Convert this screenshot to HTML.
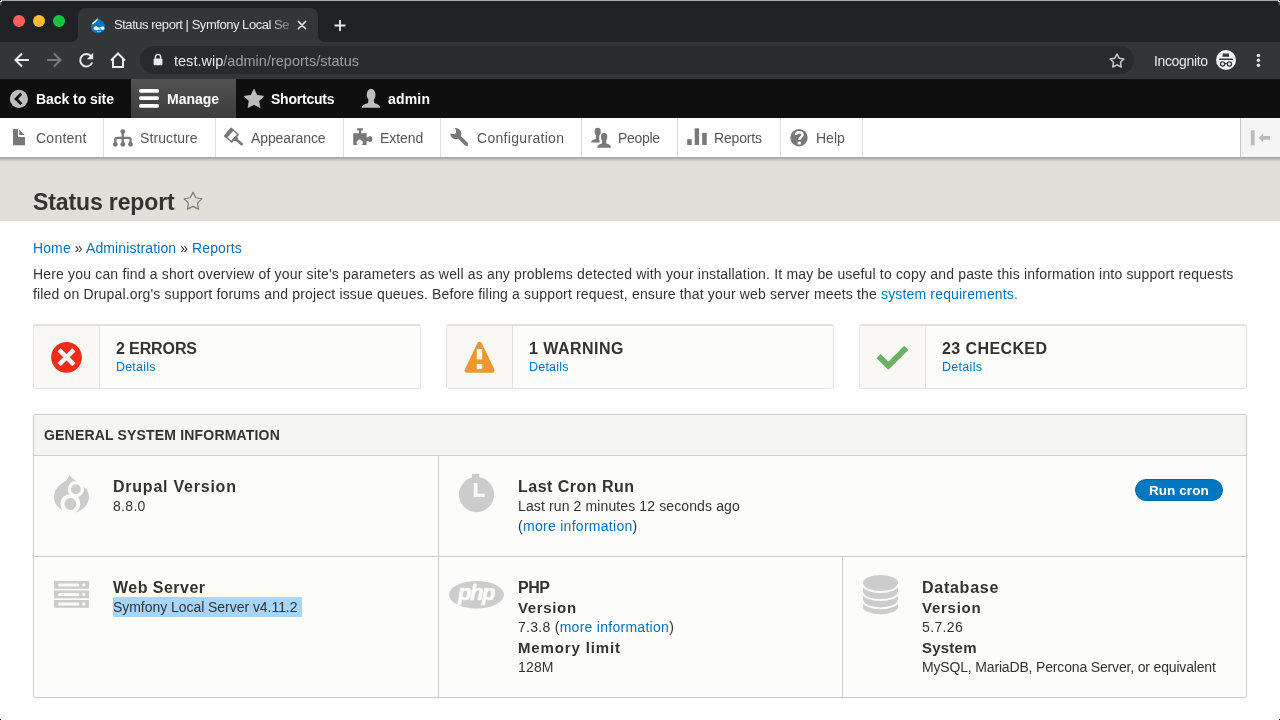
<!DOCTYPE html>
<html><head><meta charset="utf-8"><title>Status report</title>
<style>
html,body{margin:0;padding:0;width:1280px;height:720px;overflow:hidden;background:#fff;font-family:"Liberation Sans",sans-serif;}
.a{position:absolute;}
.tx{position:absolute;white-space:nowrap;font-family:"Liberation Sans",sans-serif;will-change:transform;}
.lk{color:#0074bd;}
svg{position:absolute;overflow:visible;}
.card{position:absolute;top:324px;width:388px;height:65px;box-sizing:border-box;border:1px solid #e6e4df;border-top:2px solid #e2e0da;border-radius:3px;background:#fcfcfa;}
.card .ic{position:absolute;left:0;top:0;width:65px;height:62px;background:#f9f8f5;border-right:1px solid #e6e4df;}
</style></head><body>
<!-- chrome tabstrip -->
<div class="a" style="left:0;top:0;width:1280px;height:42px;background:#202124"></div>
<div class="a" style="left:0;top:0;width:1280px;height:1px;background:#a9a9aa"></div>
<div class="a" style="left:78px;top:8px;width:240px;height:34px;background:#323639;border-radius:8px 8px 0 0"></div>
<!-- toolbar row -->
<div class="a" style="left:0;top:42px;width:1280px;height:37px;background:#323639"></div>
<div class="a" style="left:140px;top:46px;width:994px;height:28px;background:#282b2e;border-radius:14px"></div>
<!-- drupal toolbar -->
<div class="a" style="left:0;top:79px;width:1280px;height:39px;background:#0f0f0f"></div>
<div class="a" style="left:131px;top:79px;width:105px;height:39px;background:linear-gradient(#525252,#3c3c3c)"></div>
<!-- tray -->
<div class="a" style="left:0;top:118px;width:1280px;height:39px;background:#fff"></div>
<div class="a" style="left:1240px;top:118px;width:40px;height:39px;background:#f5f5f5;border-left:1px solid #c8c8c8;box-sizing:border-box"></div>
<div class="a" style="left:103px;top:118px;width:1px;height:39px;background:#e0e0e0"></div><div class="a" style="left:215px;top:118px;width:1px;height:39px;background:#e0e0e0"></div><div class="a" style="left:343px;top:118px;width:1px;height:39px;background:#e0e0e0"></div><div class="a" style="left:440px;top:118px;width:1px;height:39px;background:#e0e0e0"></div><div class="a" style="left:581px;top:118px;width:1px;height:39px;background:#e0e0e0"></div><div class="a" style="left:677px;top:118px;width:1px;height:39px;background:#e0e0e0"></div><div class="a" style="left:780px;top:118px;width:1px;height:39px;background:#e0e0e0"></div><div class="a" style="left:862px;top:118px;width:1px;height:39px;background:#e0e0e0"></div>
<!-- header -->
<div class="a" style="left:0;top:157px;width:1280px;height:64px;background:#e0e0d8"></div>
<div class="a" style="left:0;top:157px;width:1280px;height:5px;background:linear-gradient(#a2a29c,#e0e0d8)"></div>

<!-- status cards -->
<div class="card" style="left:33px"><div class="ic"></div></div>
<div class="card" style="left:446px"><div class="ic"></div></div>
<div class="card" style="left:859px"><div class="ic"></div></div>
<!-- details box -->
<div class="a" style="left:33px;top:414px;width:1214px;height:284px;box-sizing:border-box;border:1px solid #cccccc;border-radius:2px;background:#fcfcfa"></div>
<div class="a" style="left:34px;top:415px;width:1212px;height:40px;background:#f5f5f2;border-bottom:1px solid #cccccc"></div>
<div class="a" style="left:438px;top:456px;width:1px;height:241px;background:#cccccc"></div>
<div class="a" style="left:34px;top:556px;width:1212px;height:1px;background:#cccccc"></div>
<div class="a" style="left:842px;top:557px;width:1px;height:140px;background:#cccccc"></div>
<div class="a" style="left:113px;top:597px;width:189px;height:20px;background:#a8d5fb"></div>
<div class="a" style="left:1135px;top:479px;width:88px;height:22px;box-sizing:border-box;border-radius:11px;background:#0077c0;border:1px solid #0068ae"></div>

<svg width="1280" height="720" style="left:0;top:0" viewBox="0 0 1280 720">
<!-- traffic lights -->
<circle cx="19" cy="21" r="6" fill="#fe5f57"/>
<circle cx="39" cy="21" r="6" fill="#febc2e"/>
<circle cx="59" cy="21" r="6" fill="#14c541"/>
<!-- tab flare -->
<path d="M70,42 Q78,42 78,34 L78,42 Z" fill="#323639"/>
<path d="M326,42 Q318,42 318,34 L318,42 Z" fill="#323639"/>
<!-- favicon -->
<path d="M97.6,17.6 C99,19.8 102.8,21 104.2,23.4 C104.9,24.6 105.2,25.9 105.2,27.1 A7.2,6.2 0 0 1 90.8,27.1 C90.8,25.5 91.2,24.1 92.2,22.9 C93.8,20.9 96.6,20.1 97.6,17.6 Z" fill="#0678be"/>
<path d="M91.9,23.5 C93.2,21.4 96.2,20.4 97.5,18.2 L97.6,20 C96.8,21.6 94.6,22.6 93,24.6 Z" fill="#eef4fa"/>
<path d="M93.6,28.2 C93.8,26.6 95.6,25.8 97,26.6 C98,27.2 98.6,28 99.6,27.6 C100.8,27 101.6,26.6 103,26.6 C104.4,26.6 104.6,28.2 104.3,29.2 C104,30.2 102.4,30.2 101.2,29.6 C100.2,29.2 99.2,29.8 98,30.1 C96,30.6 93.4,30 93.6,28.2 Z" fill="#fff"/>
<path d="M99.4,28.6 L100.8,28.2 L100.4,29.4 Z" fill="#0678be"/>
<rect x="97" y="31.2" width="4.2" height="0.9" fill="#9ccbeb"/>
<!-- tab close & new tab -->
<path d="M298.3,21.4 L305.7,28.8 M305.7,21.4 L298.3,28.8" stroke="#e8eaed" stroke-width="1.5" stroke-linecap="round"/>
<path d="M340,20 L340,31 M334.5,25.5 L345.5,25.5" stroke="#e8eaed" stroke-width="1.8"/>
<!-- nav -->
<path d="M29,60 L16,60 M22,53.5 L15.5,60 L22,66.5" stroke="#e8eaed" stroke-width="2" fill="none"/>
<path d="M47,60 L60,60 M54,53.5 L60.5,60 L54,66.5" stroke="#76797d" stroke-width="2" fill="none"/>
<path d="M91.3,56.5 A6.2,6.2 0 1 0 92.2,62.5" stroke="#e8eaed" stroke-width="2" fill="none"/>
<path d="M93.2,52.8 L93.2,59.2 L86.8,59.2 Z" fill="#e8eaed"/>
<path d="M111,60.5 L118,53.5 L125,60.5 M113,59 L113,67 L123,67 L123,59" stroke="#e8eaed" stroke-width="2" fill="none" stroke-linejoin="miter"/>
<!-- lock -->
<rect x="153.6" y="58.5" width="8.8" height="6.8" rx="1" fill="#e8eaed"/>
<path d="M155.4,58.8 L155.4,57 A2.6,2.6 0 0 1 160.6,57 L160.6,58.8" stroke="#e8eaed" stroke-width="1.4" fill="none"/>
<!-- omnibox star -->
<polygon points="1117.00,54.00 1119.17,58.21 1123.85,58.98 1120.52,62.34 1121.23,67.02 1117.00,64.90 1112.77,67.02 1113.48,62.34 1110.15,58.98 1114.83,58.21" fill="none" stroke="#c8cbcf" stroke-width="1.5" stroke-linejoin="round"/>
<!-- incognito -->
<circle cx="1226" cy="60" r="10" fill="#f1f3f4"/>
<path d="M1222.3,56.8 L1223,53.2 L1225.8,53.8 L1228.6,53.2 L1229.3,56.8 Z" fill="#35363a"/>
<rect x="1219" y="58.4" width="14" height="1.7" rx="0.8" fill="#35363a"/>
<circle cx="1222.6" cy="64" r="2.1" fill="none" stroke="#35363a" stroke-width="1.3"/>
<circle cx="1229.4" cy="64" r="2.1" fill="none" stroke="#35363a" stroke-width="1.3"/>
<path d="M1224.7,63.6 L1227.3,63.6" stroke="#35363a" stroke-width="1.1"/>
<!-- kebab -->
<circle cx="1258.4" cy="55.4" r="1.7" fill="#e8eaed"/>
<circle cx="1258.4" cy="60.3" r="1.7" fill="#e8eaed"/>
<circle cx="1258.4" cy="65.3" r="1.7" fill="#e8eaed"/>
<!-- toolbar icons -->
<circle cx="18.9" cy="98.9" r="9.1" fill="#bebebe"/>
<path d="M21.4,93.6 L16.1,98.9 L21.4,104.2" stroke="#0f0f0f" stroke-width="2.8" fill="none" stroke-linejoin="miter" stroke-miterlimit="10"/>
<rect x="139" y="88.9" width="20.1" height="3.9" rx="1.9" fill="#fff"/>
<rect x="139" y="96.2" width="20.1" height="3.9" rx="1.9" fill="#fff"/>
<rect x="139" y="103.9" width="20.1" height="3.9" rx="1.9" fill="#fff"/>
<polygon points="254.00,89.30 256.94,95.35 263.61,96.28 258.76,100.95 259.94,107.57 254.00,104.40 248.06,107.57 249.24,100.95 244.39,96.28 251.06,95.35" fill="#bebebe" stroke="#bebebe" stroke-width="0.8" stroke-linejoin="round"/>
<ellipse cx="371.1" cy="94.8" rx="4.4" ry="6" fill="#bebebe"/>
<path d="M368.6,99 L373.6,99 L374.2,103 C377,104 380,105 380.2,107.8 L361.8,107.8 C362,105 365,104 368,103 Z" fill="#bebebe"/>
<!-- tray icons -->
<path d="M13,129 L18,129 L18,137 L25,137 L25,145.2 L13,145.2 Z" fill="#787878"/>
<path d="M19.2,129.5 L24.7,135 L19.2,135 Z" fill="#787878"/>
<g fill="#787878" stroke="#787878">
<circle cx="122.8" cy="131.6" r="2.4" stroke="none"/>
<circle cx="115.3" cy="144.3" r="2.4" stroke="none"/>
<circle cx="122.8" cy="144.3" r="2.4" stroke="none"/>
<circle cx="130.5" cy="144.3" r="2.4" stroke="none"/>
<path d="M122.8,131.6 L122.8,144 M115.3,144 L115.3,139.5 Q115.3,137.9 117,137.9 L128.8,137.9 Q130.5,137.9 130.5,139.5 L130.5,144" fill="none" stroke-width="2.3"/>
</g>
<g transform="translate(231.3,135.1) rotate(41)">
<rect x="-4.5" y="-4.9" width="9" height="9.8" fill="none" stroke="#787878" stroke-width="1.3"/>
<rect x="-5.2" y="-5.6" width="4" height="11.2" fill="#787878"/>
<path d="M3.8,-5.5 L5.6,-5.5 L5.6,5.5 L3.8,5.5 Z M5.5,-3 L7.5,-1.4 L7.5,1.4 L5.5,3 Z" fill="#787878"/>
<rect x="6" y="-1.35" width="9.2" height="2.7" rx="1.35" fill="#787878"/>
</g>
<path d="M353.2,133.2 L358.8,133.2 L358.8,130.5 L357.2,130.5 L357.2,128.2 L362.8,128.2 L362.8,130.5 L361.2,130.5 L361.2,133.2 L366.6,133.2 L366.6,137.2 L368.2,137.2 A2.4,3 0 1 1 368.2,141 L366.6,141 L366.6,145 L361.7,145 A3,3 0 1 0 357.7,145 L353.2,145 Z" fill="#787878"/>
<circle cx="455.8" cy="133.6" r="5.6" fill="#787878"/>
<path d="M456.5,134.3 L466.3,144.1" stroke="#787878" stroke-width="3.7" stroke-linecap="round"/>
<circle cx="453.6" cy="131.4" r="2.5" fill="#fff"/>
<path d="M449.4,131.2 L451.6,129.2 L454.6,128 L455.6,129.6 L453.6,133.6 L450.2,133.8 Z" fill="#fff"/>
<ellipse cx="597.7" cy="131.8" rx="3.1" ry="4" fill="#787878"/>
<path d="M596,135 L599.3,135 L599.2,139.5 L600,142.6 L590.8,142.6 C591,140.5 593.5,139.6 595.8,139 Z" fill="#787878"/>
<ellipse cx="604.1" cy="137" rx="3.2" ry="4.1" fill="#fff" stroke="#fff" stroke-width="1.6"/>
<path d="M602.2,140 L606,140 L606.3,143.6 C609,144.3 611,145.3 611,147.8 L597.2,147.8 C597.2,145.3 599.4,144.3 602,143.6 Z" fill="#fff" stroke="#fff" stroke-width="1.6"/>
<ellipse cx="604.1" cy="137" rx="3.2" ry="4.1" fill="#787878"/>
<path d="M602.2,140 L606,140 L606.3,143.6 C609,144.3 611,145.3 611,147.8 L597.2,147.8 C597.2,145.3 599.4,144.3 602,143.6 Z" fill="#787878"/>
<rect x="687.2" y="139.2" width="4.5" height="5.8" fill="#787878"/>
<rect x="694.7" y="128.3" width="4.4" height="16.7" fill="#787878"/>
<rect x="702.2" y="132.8" width="4.5" height="12.2" fill="#787878"/>
<circle cx="799" cy="137.7" r="8.7" fill="#787878"/>
<path d="M795.9,135.1 C795.9,131.6 802.5,131.2 802.5,134.8 C802.5,137.4 799.2,137.4 799.2,140" stroke="#fff" stroke-width="2.5" fill="none"/>
<rect x="797.6" y="141.7" width="3.2" height="2.8" fill="#fff"/>
<!-- collapse -->
<rect x="1250.8" y="130.3" width="3.9" height="15" fill="#bbbbbb"/>
<path d="M1258.7,137.9 L1263.2,133.3 L1263.2,136.1 L1270,136.1 L1270,139.7 L1263.2,139.7 L1263.2,142.5 Z" fill="#bbbbbb"/>
<!-- header star -->
<polygon points="193.00,192.30 195.82,197.72 201.84,198.73 197.57,203.08 198.47,209.12 193.00,206.40 187.53,209.12 188.43,203.08 184.16,198.73 190.18,197.72" fill="none" stroke="#7d7b6a" stroke-width="1.2" stroke-linejoin="round"/>
<!-- status icons -->
<circle cx="66.5" cy="357.3" r="15.4" fill="#f02b17"/>
<path d="M59.1,349.9 L73.9,364.7 M73.9,349.9 L59.1,364.7" stroke="#fbfaf8" stroke-width="4.5"/>
<polygon points="479.6,344.3 467.1,370.3 492.1,370.3" fill="#ee9630" stroke="#ee9630" stroke-width="5" stroke-linejoin="round"/>
<rect x="476.8" y="348.9" width="5.4" height="10.5" fill="#fff"/>
<rect x="476.8" y="363.9" width="5.4" height="5" fill="#fff"/>
<path d="M878.5,356.2 L888.4,365.7 L906.3,347.9" stroke="#6ab165" stroke-width="5.8" fill="none" stroke-linejoin="miter"/>
<!-- details icons -->
<path d="M69.4,474.2 C71.5,478.5 76.5,481 80,483 C85.5,486.5 88.9,491 88.9,497 A17.45,15.6 0 0 1 54,497 C54,489 60,484.5 64,482 C67,480 69,477.5 69.4,474.2 Z" fill="#cccccc"/>
<path d="M76,480.4 L91,477 L91,488.3 L84.4,488.2 L82.6,485 Z" fill="#fcfcfa"/>
<circle cx="75.9" cy="489.2" r="6.5" fill="#cccccc" stroke="#fcfcfa" stroke-width="3.2"/>
<circle cx="70.4" cy="503.9" r="8" fill="#cccccc" stroke="#fcfcfa" stroke-width="4"/>
<circle cx="476.5" cy="494.6" r="17.6" fill="#cccccc"/>
<rect x="472" y="474" width="7" height="4" fill="#cccccc"/>
<path d="M473.7,483 L477.5,483 L477.5,493.7 L484.8,493.7 L484.8,497 L473.7,497 Z" fill="#fcfcfa"/>
<g fill="#cccccc">
<rect x="54" y="581" width="35" height="7.8"/>
<rect x="54" y="590.5" width="35" height="7.8"/>
<rect x="54" y="600" width="35" height="7.8"/>
</g>
<g fill="#fcfcfa">
<rect x="58" y="583.4" width="21.3" height="3" rx="1.5"/>
<rect x="58" y="592.9" width="21.3" height="3" rx="1.5"/>
<rect x="58" y="602.4" width="21.3" height="3" rx="1.5"/>
<circle cx="83.9" cy="584.9" r="1.6"/>
<circle cx="83.9" cy="594.4" r="1.6"/>
<circle cx="83.9" cy="603.9" r="1.6"/>
</g>
<ellipse cx="476.5" cy="594.7" rx="27.5" ry="13.8" fill="#cccccc"/>
<text x="476" y="600" text-anchor="middle" font-family="Liberation Sans" font-weight="bold" font-style="italic" font-size="22" fill="#fcfcfa" stroke="#fcfcfa" stroke-width="0.5" letter-spacing="-1.4">php</text>
<path d="M863,582.5 A17.5,7.5 0 0 1 898,582.5 L898,606.8 A17.5,7.5 0 0 1 863,606.8 Z" fill="#cccccc"/>
<path d="M863,584.5 A17.5,7.5 0 0 0 898,584.5 M863,592.7 A17.5,7.5 0 0 0 898,592.7 M863,600.8 A17.5,7.5 0 0 0 898,600.8" stroke="#fcfcfa" stroke-width="1.8" fill="none"/>
</svg>
<div class="tx" style="left:114.00px;top:15.00px;font-size:13px;font-weight:400;color:#e8eaed;letter-spacing:-0.462px;line-height:20px;">Status report | Symfony Local Se</div>
<div class="tx" style="left:173.50px;top:51.00px;font-size:14.5px;font-weight:400;color:#e8eaed;letter-spacing:0.015px;line-height:20px;">test.wip<span style="color:#9aa0a6">/admin/reports/status</span></div>
<div class="tx" style="left:1154.00px;top:51.00px;font-size:14px;font-weight:400;color:#e8eaed;letter-spacing:-0.354px;line-height:20px;">Incognito</div>
<div class="tx" style="left:35.50px;top:89.00px;font-size:14px;font-weight:700;color:#fff;letter-spacing:-0.054px;line-height:20px;">Back to site</div>
<div class="tx" style="left:166.50px;top:89.00px;font-size:14px;font-weight:700;color:#fff;letter-spacing:-0.025px;line-height:20px;">Manage</div>
<div class="tx" style="left:271.00px;top:89.00px;font-size:14px;font-weight:700;color:#fff;letter-spacing:-0.230px;line-height:20px;">Shortcuts</div>
<div class="tx" style="left:387.50px;top:89.00px;font-size:14px;font-weight:700;color:#fff;letter-spacing:0.191px;line-height:20px;">admin</div>
<div class="tx" style="left:35.50px;top:128.00px;font-size:14px;font-weight:400;color:#565656;letter-spacing:0.242px;line-height:20px;">Content</div>
<div class="tx" style="left:139.50px;top:128.00px;font-size:14px;font-weight:400;color:#565656;letter-spacing:0.098px;line-height:20px;">Structure</div>
<div class="tx" style="left:251.10px;top:128.00px;font-size:14px;font-weight:400;color:#565656;letter-spacing:-0.102px;line-height:20px;">Appearance</div>
<div class="tx" style="left:379.90px;top:128.00px;font-size:14px;font-weight:400;color:#565656;letter-spacing:-0.079px;line-height:20px;">Extend</div>
<div class="tx" style="left:477.00px;top:128.00px;font-size:14px;font-weight:400;color:#565656;letter-spacing:0.310px;line-height:20px;">Configuration</div>
<div class="tx" style="left:617.50px;top:128.00px;font-size:14px;font-weight:400;color:#565656;letter-spacing:-0.319px;line-height:20px;">People</div>
<div class="tx" style="left:713.50px;top:128.00px;font-size:14px;font-weight:400;color:#565656;letter-spacing:-0.172px;line-height:20px;">Reports</div>
<div class="tx" style="left:816.20px;top:128.00px;font-size:14px;font-weight:400;color:#565656;letter-spacing:0.001px;line-height:20px;">Help</div>
<div class="tx" style="left:32.80px;top:192.00px;font-size:23px;font-weight:700;color:#333;letter-spacing:-0.120px;line-height:20px;">Status report</div>
<div class="tx" style="left:32.50px;top:238.00px;font-size:14px;font-weight:400;color:#333;letter-spacing:0.111px;line-height:20px;"><span class="lk">Home</span> » <span class="lk">Administration</span> » <span class="lk">Reports</span></div>
<div class="tx" style="left:32.90px;top:264.00px;font-size:14px;font-weight:400;color:#333;letter-spacing:0.172px;line-height:20px;">Here you can find a short overview of your site's parameters as well as any problems detected with your installation. It may be useful to copy and paste this information into support requests</div>
<div class="tx" style="left:32.90px;top:284.00px;font-size:14px;font-weight:400;color:#333;letter-spacing:0.164px;line-height:20px;">filed on Drupal.org's support forums and project issue queues. Before filing a support request, ensure that your web server meets the <span class="lk">system requirements.</span></div>
<div class="tx" style="left:115.50px;top:339.00px;font-size:16px;font-weight:700;color:#333;letter-spacing:-0.114px;line-height:20px;">2 ERRORS</div>
<div class="tx" style="left:115.50px;top:357.00px;font-size:12.5px;font-weight:400;color:#0074bd;letter-spacing:0.197px;line-height:20px;">Details</div>
<div class="tx" style="left:528.50px;top:339.00px;font-size:16px;font-weight:700;color:#333;letter-spacing:0.479px;line-height:20px;">1 WARNING</div>
<div class="tx" style="left:528.50px;top:357.00px;font-size:12.5px;font-weight:400;color:#0074bd;letter-spacing:0.214px;line-height:20px;">Details</div>
<div class="tx" style="left:941.50px;top:339.00px;font-size:16px;font-weight:700;color:#333;letter-spacing:0.405px;line-height:20px;">23 CHECKED</div>
<div class="tx" style="left:941.50px;top:357.00px;font-size:12.5px;font-weight:400;color:#0074bd;letter-spacing:0.297px;line-height:20px;">Details</div>
<div class="tx" style="left:43.50px;top:425.00px;font-size:14px;font-weight:700;color:#333;letter-spacing:0.181px;line-height:20px;">GENERAL SYSTEM INFORMATION</div>
<div class="tx" style="left:113.10px;top:477.00px;font-size:16px;font-weight:700;color:#333;letter-spacing:0.768px;line-height:20px;">Drupal Version</div>
<div class="tx" style="left:113.10px;top:496.00px;font-size:14px;font-weight:400;color:#333;letter-spacing:0.315px;line-height:20px;">8.8.0</div>
<div class="tx" style="left:518.25px;top:477.00px;font-size:16px;font-weight:700;color:#333;letter-spacing:0.482px;line-height:20px;">Last Cron Run</div>
<div class="tx" style="left:518.25px;top:496.00px;font-size:14px;font-weight:400;color:#333;letter-spacing:0.120px;line-height:20px;">Last run 2 minutes 12 seconds ago</div>
<div class="tx" style="left:518.25px;top:516.00px;font-size:14px;font-weight:400;color:#333;letter-spacing:0.286px;line-height:20px;">(<span class="lk">more information</span>)</div>
<div class="tx" style="left:1148.70px;top:481.00px;font-size:13.5px;font-weight:700;color:#fff;letter-spacing:0.064px;line-height:20px;">Run cron</div>
<div class="tx" style="left:112.50px;top:578.00px;font-size:16px;font-weight:700;color:#333;letter-spacing:0.472px;line-height:20px;">Web Server</div>
<div class="tx" style="left:112.50px;top:597.00px;font-size:14px;font-weight:400;color:#333;letter-spacing:-0.045px;line-height:20px;">Symfony Local Server v4.11.2</div>
<div class="tx" style="left:518.40px;top:578.00px;font-size:16px;font-weight:700;color:#333;letter-spacing:-0.503px;line-height:20px;">PHP</div>
<div class="tx" style="left:518.40px;top:598.00px;font-size:15px;font-weight:700;color:#333;letter-spacing:0.649px;line-height:20px;">Version</div>
<div class="tx" style="left:518.40px;top:617.00px;font-size:14px;font-weight:400;color:#333;letter-spacing:0.277px;line-height:20px;">7.3.8 (<span class="lk">more information</span>)</div>
<div class="tx" style="left:518.40px;top:638.00px;font-size:15px;font-weight:700;color:#333;letter-spacing:0.870px;line-height:20px;">Memory limit</div>
<div class="tx" style="left:518.40px;top:657.00px;font-size:14px;font-weight:400;color:#333;letter-spacing:0.156px;line-height:20px;">128M</div>
<div class="tx" style="left:922.40px;top:578.00px;font-size:16px;font-weight:700;color:#333;letter-spacing:0.735px;line-height:20px;">Database</div>
<div class="tx" style="left:922.40px;top:598.00px;font-size:15px;font-weight:700;color:#333;letter-spacing:0.749px;line-height:20px;">Version</div>
<div class="tx" style="left:922.40px;top:617.00px;font-size:14px;font-weight:400;color:#333;letter-spacing:0.353px;line-height:20px;">5.7.26</div>
<div class="tx" style="left:922.40px;top:638.00px;font-size:15px;font-weight:700;color:#333;letter-spacing:0.225px;line-height:20px;">System</div>
<div class="tx" style="left:922.40px;top:657.00px;font-size:14px;font-weight:400;color:#333;letter-spacing:-0.165px;line-height:20px;">MySQL, MariaDB, Percona Server, or equivalent</div>
<div class="a" style="left:271px;top:14px;width:21px;height:22px;background:linear-gradient(90deg,rgba(50,54,57,0.15),rgba(50,54,57,0.75));z-index:5"></div>
<div class="a" style="left:0;top:0;width:1px;height:1px;background:#000;z-index:9"></div>
<div class="a" style="left:1279px;top:0;width:1px;height:1px;background:#000;z-index:9"></div>
<div class="a" style="left:0;top:719px;width:1px;height:1px;background:#000;z-index:9"></div>
<div class="a" style="left:1279px;top:719px;width:1px;height:1px;background:#000;z-index:9"></div>
<div class="a" style="left:1px;top:0;width:1px;height:2px;background:#fff;z-index:9"></div>
<div class="a" style="left:0;top:1px;width:2px;height:1px;background:#fff;z-index:9"></div>
<div class="a" style="left:1278px;top:0;width:1px;height:2px;background:#fff;z-index:9"></div>
<div class="a" style="left:1278px;top:1px;width:2px;height:1px;background:#fff;z-index:9"></div>
<div class="a" style="left:0;top:2px;width:1px;height:3px;background:#777;z-index:9"></div>
<div class="a" style="left:1279px;top:2px;width:1px;height:3px;background:#777;z-index:9"></div>
</body></html>
